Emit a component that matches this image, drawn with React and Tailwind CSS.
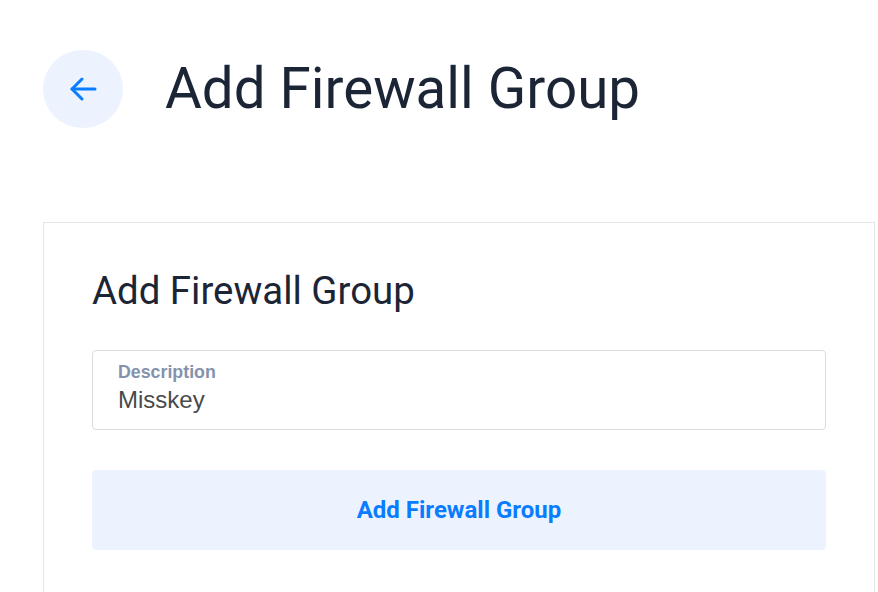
export default function App() {
  return (
    <div className="min-h-screen bg-white pl-[43px] pt-[50px] font-['Roboto',sans-serif] overflow-hidden">
      {/* Page header */}
      <div className="flex items-center gap-[42px]">
        <button className="w-[80px] h-[78px] rounded-full bg-[#edf3fe] flex items-center justify-center">
          <svg width="28" height="26" viewBox="0 0 28 26" fill="none" stroke="#0a7cff" strokeWidth="3" strokeLinecap="round" strokeLinejoin="round">
            <path d="M26 13H3" />
            <path d="M13 3L3 13L13 23" />
          </svg>
        </button>
        <h1 className="text-[56.5px] leading-none text-[#1c2536] font-normal">Add Firewall Group</h1>
      </div>

      {/* Card */}
      <div className="mt-[94px] w-[832px] border border-[#e6e6e6] pl-[48px] pr-[48px] pt-[46px] pb-[60px]">
        <h2 className="text-[38.4px] leading-[44px] text-[#1c2536] font-normal">Add Firewall Group</h2>

        <div className="mt-[37px] h-[80px] border border-[#dcdcdc] rounded-[4px] px-[25px] pt-[10px] font-['Liberation_Sans',sans-serif]">
          <div className="text-[17.8px] leading-[22px] font-bold text-[#8592ad]">Description</div>
          <div className="mt-[2px] text-[24px] leading-[30px] text-[#4a4a4a]">Misskey</div>
        </div>

        <button className="mt-[40px] w-full h-[80px] rounded-[4px] bg-[#edf3fe] text-[#0a7cff] text-[24px] font-bold">
          Add Firewall Group
        </button>
      </div>
    </div>
  );
}
